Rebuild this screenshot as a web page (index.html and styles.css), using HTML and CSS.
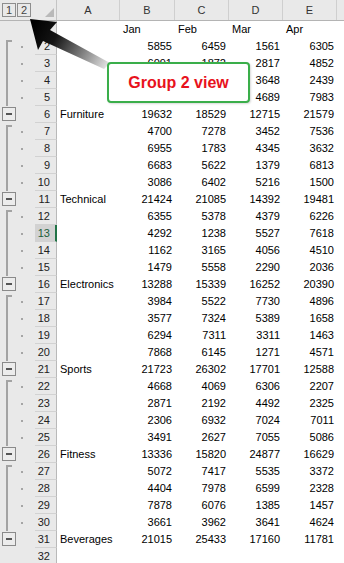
FILE: index.html
```html
<!DOCTYPE html>
<html>
<head>
<meta charset="utf-8">
<link rel="stylesheet" href="styles.css">
</head>
<body>
<div class="sheet">
  <div class="hdr">
    <div class="hg"><span class="lvl">1</span><span class="lvl">2</span></div>
    <div class="corner"></div>
    <div class="ch w-a">A</div>
    <div class="ch w-b">B</div>
    <div class="ch w-c">C</div>
    <div class="ch w-d">D</div>
    <div class="ch w-e">E</div>
    <div class="ch w-f"></div>
  </div>

  <div class="row"><div class="g"></div><div class="rh">1</div><div class="c w-a"></div><div class="c w-b">Jan</div><div class="c w-c">Feb</div><div class="c w-d">Mar</div><div class="c w-e">Apr</div></div>
  <div class="row"><div class="g first"><i class="dot"></i></div><div class="rh">2</div><div class="c w-a"></div><div class="c w-b n">5855</div><div class="c w-c n">6459</div><div class="c w-d n">1561</div><div class="c w-e n">6305</div></div>
  <div class="row"><div class="g mid"><i class="dot"></i></div><div class="rh">3</div><div class="c w-a"></div><div class="c w-b n">6091</div><div class="c w-c n">1872</div><div class="c w-d n">2817</div><div class="c w-e n">4852</div></div>
  <div class="row"><div class="g mid"><i class="dot"></i></div><div class="rh">4</div><div class="c w-a"></div><div class="c w-b n"></div><div class="c w-c n"></div><div class="c w-d n">3648</div><div class="c w-e n">2439</div></div>
  <div class="row"><div class="g mid"><i class="dot"></i></div><div class="rh">5</div><div class="c w-a"></div><div class="c w-b n"></div><div class="c w-c n"></div><div class="c w-d n">4689</div><div class="c w-e n">7983</div></div>
  <div class="row"><div class="g sum"><i class="minus"></i></div><div class="rh">6</div><div class="c w-a">Furniture</div><div class="c w-b n">19632</div><div class="c w-c n">18529</div><div class="c w-d n">12715</div><div class="c w-e n">21579</div></div>

  <div class="row"><div class="g first"><i class="dot"></i></div><div class="rh">7</div><div class="c w-a"></div><div class="c w-b n">4700</div><div class="c w-c n">7278</div><div class="c w-d n">3452</div><div class="c w-e n">7536</div></div>
  <div class="row"><div class="g mid"><i class="dot"></i></div><div class="rh">8</div><div class="c w-a"></div><div class="c w-b n">6955</div><div class="c w-c n">1783</div><div class="c w-d n">4345</div><div class="c w-e n">3632</div></div>
  <div class="row"><div class="g mid"><i class="dot"></i></div><div class="rh">9</div><div class="c w-a"></div><div class="c w-b n">6683</div><div class="c w-c n">5622</div><div class="c w-d n">1379</div><div class="c w-e n">6813</div></div>
  <div class="row"><div class="g mid"><i class="dot"></i></div><div class="rh">10</div><div class="c w-a"></div><div class="c w-b n">3086</div><div class="c w-c n">6402</div><div class="c w-d n">5216</div><div class="c w-e n">1500</div></div>
  <div class="row"><div class="g sum"><i class="minus"></i></div><div class="rh">11</div><div class="c w-a">Technical</div><div class="c w-b n">21424</div><div class="c w-c n">21085</div><div class="c w-d n">14392</div><div class="c w-e n">19481</div></div>

  <div class="row"><div class="g first"><i class="dot"></i></div><div class="rh">12</div><div class="c w-a"></div><div class="c w-b n">6355</div><div class="c w-c n">5378</div><div class="c w-d n">4379</div><div class="c w-e n">6226</div></div>
  <div class="row"><div class="g mid"><i class="dot"></i></div><div class="rh sel">13</div><div class="c w-a"></div><div class="c w-b n">4292</div><div class="c w-c n">1238</div><div class="c w-d n">5527</div><div class="c w-e n">7618</div></div>
  <div class="row"><div class="g mid"><i class="dot"></i></div><div class="rh">14</div><div class="c w-a"></div><div class="c w-b n">1162</div><div class="c w-c n">3165</div><div class="c w-d n">4056</div><div class="c w-e n">4510</div></div>
  <div class="row"><div class="g mid"><i class="dot"></i></div><div class="rh">15</div><div class="c w-a"></div><div class="c w-b n">1479</div><div class="c w-c n">5558</div><div class="c w-d n">2290</div><div class="c w-e n">2036</div></div>
  <div class="row"><div class="g sum"><i class="minus"></i></div><div class="rh">16</div><div class="c w-a">Electronics</div><div class="c w-b n">13288</div><div class="c w-c n">15339</div><div class="c w-d n">16252</div><div class="c w-e n">20390</div></div>

  <div class="row"><div class="g first"><i class="dot"></i></div><div class="rh">17</div><div class="c w-a"></div><div class="c w-b n">3984</div><div class="c w-c n">5522</div><div class="c w-d n">7730</div><div class="c w-e n">4896</div></div>
  <div class="row"><div class="g mid"><i class="dot"></i></div><div class="rh">18</div><div class="c w-a"></div><div class="c w-b n">3577</div><div class="c w-c n">7324</div><div class="c w-d n">5389</div><div class="c w-e n">1658</div></div>
  <div class="row"><div class="g mid"><i class="dot"></i></div><div class="rh">19</div><div class="c w-a"></div><div class="c w-b n">6294</div><div class="c w-c n">7311</div><div class="c w-d n">3311</div><div class="c w-e n">1463</div></div>
  <div class="row"><div class="g mid"><i class="dot"></i></div><div class="rh">20</div><div class="c w-a"></div><div class="c w-b n">7868</div><div class="c w-c n">6145</div><div class="c w-d n">1271</div><div class="c w-e n">4571</div></div>
  <div class="row"><div class="g sum"><i class="minus"></i></div><div class="rh">21</div><div class="c w-a">Sports</div><div class="c w-b n">21723</div><div class="c w-c n">26302</div><div class="c w-d n">17701</div><div class="c w-e n">12588</div></div>

  <div class="row"><div class="g first"><i class="dot"></i></div><div class="rh">22</div><div class="c w-a"></div><div class="c w-b n">4668</div><div class="c w-c n">4069</div><div class="c w-d n">6306</div><div class="c w-e n">2207</div></div>
  <div class="row"><div class="g mid"><i class="dot"></i></div><div class="rh">23</div><div class="c w-a"></div><div class="c w-b n">2871</div><div class="c w-c n">2192</div><div class="c w-d n">4492</div><div class="c w-e n">2325</div></div>
  <div class="row"><div class="g mid"><i class="dot"></i></div><div class="rh">24</div><div class="c w-a"></div><div class="c w-b n">2306</div><div class="c w-c n">6932</div><div class="c w-d n">7024</div><div class="c w-e n">7011</div></div>
  <div class="row"><div class="g mid"><i class="dot"></i></div><div class="rh">25</div><div class="c w-a"></div><div class="c w-b n">3491</div><div class="c w-c n">2627</div><div class="c w-d n">7055</div><div class="c w-e n">5086</div></div>
  <div class="row"><div class="g sum"><i class="minus"></i></div><div class="rh">26</div><div class="c w-a">Fitness</div><div class="c w-b n">13336</div><div class="c w-c n">15820</div><div class="c w-d n">24877</div><div class="c w-e n">16629</div></div>

  <div class="row"><div class="g first"><i class="dot"></i></div><div class="rh">27</div><div class="c w-a"></div><div class="c w-b n">5072</div><div class="c w-c n">7417</div><div class="c w-d n">5535</div><div class="c w-e n">3372</div></div>
  <div class="row"><div class="g mid"><i class="dot"></i></div><div class="rh">28</div><div class="c w-a"></div><div class="c w-b n">4404</div><div class="c w-c n">7978</div><div class="c w-d n">6599</div><div class="c w-e n">2328</div></div>
  <div class="row"><div class="g mid"><i class="dot"></i></div><div class="rh">29</div><div class="c w-a"></div><div class="c w-b n">7878</div><div class="c w-c n">6076</div><div class="c w-d n">1385</div><div class="c w-e n">1457</div></div>
  <div class="row"><div class="g mid"><i class="dot"></i></div><div class="rh">30</div><div class="c w-a"></div><div class="c w-b n">3661</div><div class="c w-c n">3962</div><div class="c w-d n">3641</div><div class="c w-e n">4624</div></div>
  <div class="row"><div class="g sum"><i class="minus"></i></div><div class="rh">31</div><div class="c w-a">Beverages</div><div class="c w-b n">21015</div><div class="c w-c n">25433</div><div class="c w-d n">17160</div><div class="c w-e n">11781</div></div>
  <div class="row"><div class="g"></div><div class="rh">32</div><div class="c w-a"></div><div class="c w-b"></div><div class="c w-c"></div><div class="c w-d"></div><div class="c w-e"></div></div>

  <svg class="arrow" width="120" height="80" viewBox="0 0 120 80">
    <defs>
      <linearGradient id="ag" gradientUnits="userSpaceOnUse" x1="34" y1="24" x2="108" y2="66">
        <stop offset="0" stop-color="#000"/>
        <stop offset="0.3" stop-color="#151515"/>
        <stop offset="0.7" stop-color="#8a8a8a"/>
        <stop offset="1" stop-color="#e4e4e4"/>
      </linearGradient>
    </defs>
    <polygon points="30,19 57,22 50,30 110,63 104,69 43,41 38,50" fill="url(#ag)"/>
  </svg>

  <div class="callout">Group 2 view</div>
</div>
</body>
</html>
```

FILE: styles.css
```css
* { box-sizing: border-box; }
html, body { margin: 0; padding: 0; background: #fff; }
body {
  font-family: "Liberation Sans", Arial, sans-serif;
  font-size: 11px;
  color: #000;
}
.sheet {
  position: relative;
  width: 344px;
  height: 563px;
  overflow: hidden;
}
.hdr {
  display: flex;
  height: 21px;
  background: #e9e9e9;
  border-bottom: 1px solid #b4b4b4;
}
.hg {
  width: 35px;
  display: flex;
  gap: 1px;
  padding: 3px 0 0 2px;
}
.lvl {
  width: 14px;
  height: 14px;
  border: 1px solid #8e8e8e;
  display: flex;
  align-items: center;
  justify-content: center;
  color: #444;
  font-size: 11px;
  line-height: 1;
}
.corner {
  width: 22px;
  position: relative;
  border-right: 1px solid #c4c4c4;
}
.corner::after {
  content: "";
  position: absolute;
  right: 2px;
  bottom: 3px;
  width: 0;
  height: 0;
  border-left: 9px solid transparent;
  border-bottom: 9px solid #b9b9b9;
}
.ch {
  display: flex;
  align-items: center;
  justify-content: center;
  border-right: 1px solid #cfcfcf;
  color: #333;
  font-size: 11px;
}
.w-a { width: 63px; flex: none; }
.w-b { width: 55px; flex: none; }
.w-c { width: 54px; flex: none; }
.w-d { width: 54px; flex: none; }
.w-e { width: 54px; flex: none; }
.w-f { flex: 1; border-right: none; }

.row {
  display: flex;
  height: 17px;
}
.g {
  width: 35px;
  flex: none;
  background: #e9e9e9;
  position: relative;
}
.rh {
  width: 22px;
  flex: none;
  background: #e9e9e9;
  border-bottom: 1px solid #d2d2d2;
  border-right: 1px solid #b9b9b9;
  text-align: right;
  padding-right: 6px;
  line-height: 17px;
  color: #222;
}
.rh.sel {
  background: #d2d2d2;
  border-right: 2px solid #217346;
  padding-right: 5px;
  color: #1b5e3a;
}
.c {
  line-height: 17px;
  padding: 0 3px;
  white-space: nowrap;
}
.c.n { text-align: right; }

.g.first::before,
.g.mid::before {
  content: "";
  position: absolute;
  left: 6px;
  width: 2px;
  bottom: 0;
  background: #a3a3a3;
}
.g.first::before { top: 2px; }
.g.mid::before { top: 0; }
.g.first::after {
  content: "";
  position: absolute;
  left: 6px;
  top: 2px;
  width: 6px;
  height: 2px;
  background: #a3a3a3;
}
.dot {
  position: absolute;
  left: 21px;
  top: 8px;
  width: 2px;
  height: 2px;
  background: #a5a5a5;
}
.minus {
  position: absolute;
  left: 2px;
  top: 1px;
  width: 14px;
  height: 14px;
  border: 1px solid #8a8a8a;
  background: #ececec;
}
.minus::after {
  content: "";
  position: absolute;
  left: 3px;
  right: 3px;
  top: 5px;
  height: 2px;
  background: #555;
}

.arrow {
  position: absolute;
  left: 0;
  top: 0;
  pointer-events: none;
}
.callout {
  position: absolute;
  left: 107px;
  top: 62px;
  width: 143px;
  height: 41px;
  border: 2px solid #3aae4a;
  border-radius: 4px;
  background: #fff;
  box-shadow: 1px 1px 2px rgba(0,0,0,0.15);
  display: flex;
  align-items: center;
  justify-content: center;
  color: #e8121c;
  font-weight: bold;
  font-size: 16px;
}
```
